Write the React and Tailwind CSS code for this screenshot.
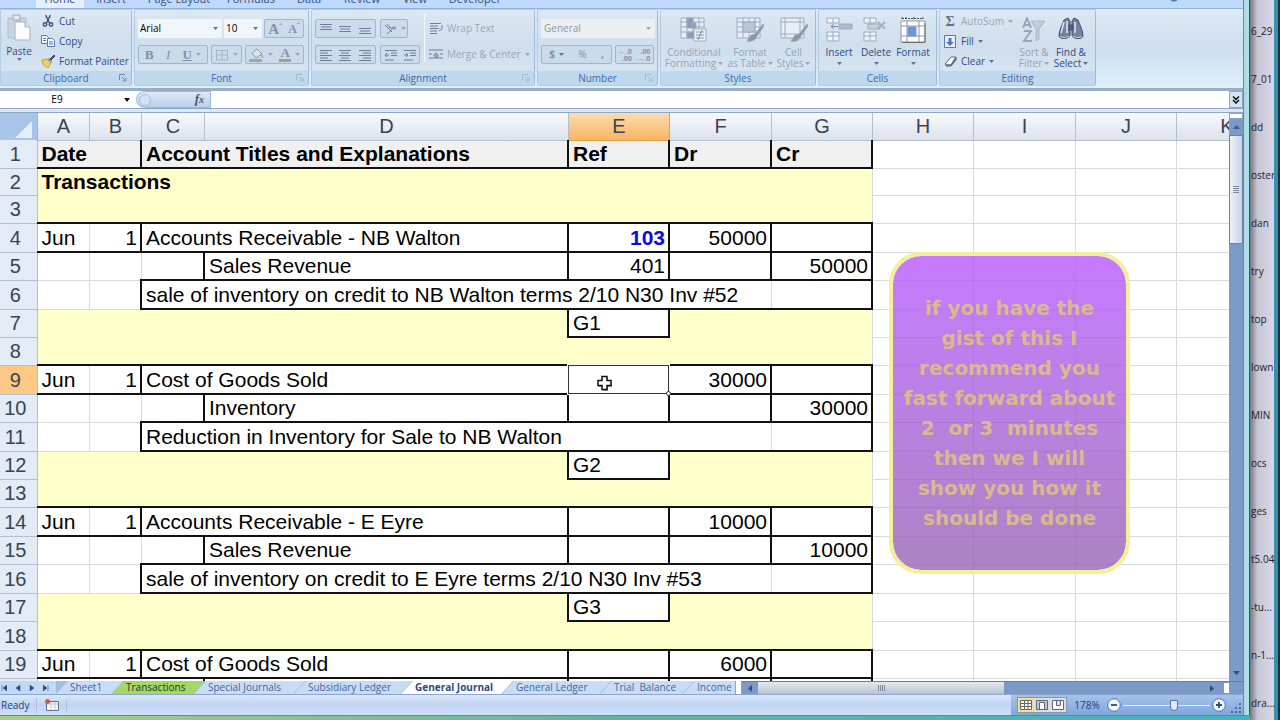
import React from 'react';
import clsx from 'clsx';

const ribbonTabs = [
    { name: 'Home', width: 'w-12' },
    { name: 'Insert', width: 'w-[54px]' },
    { name: 'Page Layout', width: 'w-[82px]' },
    { name: 'Formulas', width: 'w-[62px]' },
    { name: 'Data', width: 'w-[54px]' },
    { name: 'Review', width: 'w-[52px]' },
    { name: 'View', width: 'w-[54px]' },
    { name: 'Developer', width: 'w-[66px]' },
];

const columns = [
    { name: 'A', width: 'w-[52px]' },
    { name: 'B', width: 'w-[52px]' },
    { name: 'C', width: 'w-[63px]' },
    { name: 'D', width: 'w-[364px]' },
    { name: 'E', width: 'w-[101px]' },
    { name: 'F', width: 'w-[102px]' },
    { name: 'G', width: 'w-[101px]' },
    { name: 'H', width: 'w-[101px]' },
    { name: 'I', width: 'w-[102px]' },
    { name: 'J', width: 'w-[101px]' },
    { name: 'K', width: 'w-[101px]' },
];

// kind decides the fill and the ruled lines of a journal row
const rows = [
    { kind: 'title', height: 'h-[28px]', cells: { A: 'Date', C: 'Account Titles and Explanations', E: 'Ref', F: 'Dr', G: 'Cr' } },
    { kind: 'band', height: 'h-[27px]', cells: { A: 'Transactions' } },
    { kind: 'bandEnd', height: 'h-[28px]', cells: {} },
    { kind: 'debit', height: 'h-[29px]', cells: { A: 'Jun', B: '1', C: 'Accounts Receivable - NB Walton', E: '103', F: '50000' } },
    { kind: 'credit', height: 'h-[28px]', cells: { D: 'Sales Revenue', E: '401', G: '50000' } },
    { kind: 'note', height: 'h-[29px]', cells: { C: 'sale of inventory on credit to NB Walton terms 2/10 N30 Inv #52' } },
    { kind: 'ref', height: 'h-[28px]', cells: { E: 'G1' } },
    { kind: 'bandEnd', height: 'h-[28px]', cells: {} },
    { kind: 'debit', height: 'h-[29px]', cells: { A: 'Jun', B: '1', C: 'Cost of Goods Sold', F: '30000' } },
    { kind: 'credit', height: 'h-[28px]', cells: { D: 'Inventory', G: '30000' } },
    { kind: 'note', height: 'h-[29px]', cells: { C: 'Reduction in Inventory for Sale to NB Walton' } },
    { kind: 'ref', height: 'h-[28px]', cells: { E: 'G2' } },
    { kind: 'bandEnd', height: 'h-[28px]', cells: {} },
    { kind: 'debit', height: 'h-[29px]', cells: { A: 'Jun', B: '1', C: 'Accounts Receivable - E Eyre', F: '10000' } },
    { kind: 'credit', height: 'h-[28px]', cells: { D: 'Sales Revenue', G: '10000' } },
    { kind: 'note', height: 'h-[29px]', cells: { C: 'sale of inventory on credit to E Eyre terms 2/10 N30 Inv #53' } },
    { kind: 'ref', height: 'h-[28px]', cells: { E: 'G3' } },
    { kind: 'bandEnd', height: 'h-[29px]', cells: {} },
    { kind: 'debit', height: 'h-[28px]', cells: { A: 'Jun', B: '1', C: 'Cost of Goods Sold', F: '6000' } },
    { kind: 'credit', height: 'h-[28px]', cells: {} },
];

const rules = {
    title: { right: 'BDEFG', bottom: 'ABCDEFG', fill: 'ABCDEFG', open: 'AC' },
    band: { right: '', bottom: '', fill: 'ABCDEFG', open: 'ABCDEF' },
    bandEnd: { right: '', bottom: 'ABCDEFG', fill: 'ABCDEFG', open: 'ABCDEF' },
    debit: { right: 'BDEFG', bottom: 'ABCDEFG', fill: '', open: 'C' },
    credit: { right: 'CDEFG', bottom: 'CDEFG', fill: '', open: '' },
    note: { right: 'BG', bottom: 'CDEFG', fill: '', open: 'CDE' },
    ref: { right: 'DE', bottom: 'E', fill: 'ABCDFG', open: 'ABCF' },
};

const sheets = [
    { name: 'Sheet1', width: 'w-[67px]' },
    { name: 'Transactions', width: 'w-[93px]' },
    { name: 'Special Journals', width: 'w-[111px]' },
    { name: 'Subsidiary Ledger', width: 'w-[118px]' },
    { name: 'General Journal', width: 'w-[112px]' },
    { name: 'General Ledger', width: 'w-[109px]' },
    { name: 'Trial  Balance', width: 'w-[94px]' },
    { name: 'Income', width: 'w-[63px]' },
];

const files = ['6_29', '7_01', 'dd', 'oster', 'dan', 'try', 'top', 'lown', 'MIN', 'ocs', 'ges', 't5.04', '-tu...', 'n-1....', 'dra...'];

function Caret({ dim }) {
    return (
        <svg viewBox="0 0 5 3" className={clsx('h-[3px] w-[5px] shrink-0', dim ? 'text-[#98a6b8]' : 'text-[#5c7394]')}>
            <path d="M0 0h5L2.5 3z" fill="currentColor" />
        </svg>
    );
}

function Launcher({ dim }) {
    return (
        <svg viewBox="0 0 8 8" className={clsx('h-2 w-2', dim ? 'text-[#a9b9cc]' : 'text-[#6c8bb3]')} fill="none" stroke="currentColor">
            <path d="M.5 6V.5H6M3 3l3.5 3.5M7 3.5V7H3.5" />
        </svg>
    );
}

function Group({ title, width, launcher, dimLauncher, children }) {
    return (
        <section aria-label={title} className={clsx('flex shrink-0 flex-col rounded-[2px] border border-[#b3cbe3] border-r-[#9ebbd8] bg-linear-to-b from-[#dce8f3] via-[#cfdeec] to-[#d9e8f4]', width)}>
            <div className="flex min-h-0 flex-1 px-[2px]">{children}</div>
            <div className="flex h-[14px] shrink-0 items-center bg-[#bfd8ed] text-[#3e6aaa]">
                <span className="w-3" />
                <h2 className="flex-1 text-center leading-[14px]">{title}</h2>
                <span className="w-3">{launcher && <Launcher dim={dimLauncher} />}</span>
            </div>
        </section>
    );
}

function ToolBox({ width, children }) {
    return <div className={clsx('flex h-[19px] items-center justify-around rounded-[2px] border border-[#9db6d3] bg-[#cbdbec]', width)}>{children}</div>;
}

function Tool({ label, children }) {
    return <button aria-label={label} className="flex items-center gap-1 text-[#8292a8]">{children}</button>;
}

function Lines({ d, className = 'text-[#6b7f9c]' }) {
    return (
        <svg viewBox="0 0 14 12" className={clsx('h-3 w-[14px]', className)} fill="none" stroke="currentColor" strokeWidth="1">
            <path d={d} />
        </svg>
    );
}

function SmallButton({ icon, label, dim, caret }) {
    return (
        <button className={clsx('flex h-5 items-center gap-1 whitespace-nowrap', dim ? 'text-[#9ba6b3]' : 'text-[#2f4a86]')}>
            <span className="flex w-[14px] justify-center">{icon}</span>
            <span>{label}</span>
            {caret && <Caret dim={dim} />}
        </button>
    );
}

function BigButton({ icon, lines, dim, width, caretBelow }) {
    return (
        <button className={clsx('flex shrink-0 flex-col items-center pt-[7px] leading-[11px]', width, dim ? 'text-[#97a3b2]' : 'text-[#2f4a86]')}>
            <span className="flex h-[30px] items-start">{icon}</span>
            <span className="whitespace-nowrap">{lines[0]}</span>
            <span className="flex h-[11px] items-center gap-[2px] whitespace-nowrap">
                {lines[1]}
                {(caretBelow || lines[1]) && <Caret dim={dim} />}
            </span>
        </button>
    );
}

function PasteIcon() {
    return (
        <svg viewBox="0 0 24 28" className="h-7 w-6">
            <path d="M1 4h18v20H1z" fill="#c8d4e1" stroke="#b3c0ce" />
            <path d="M6 1h7v5H6z" fill="#e6e8ea" stroke="#9aa5b0" />
            <path d="M8 8h10l5 5v13H8z" fill="#fafcfe" stroke="#a5b2c4" />
            <path d="M18 8v5h5" fill="#dde5ee" stroke="#a5b2c4" />
        </svg>
    );
}

function CutIcon() {
    return (
        <svg viewBox="0 0 12 12" className="h-3 w-3" fill="none" stroke="#3f567c" strokeWidth="1.5">
            <path d="M3.5 0l4 8M8.500 0l-4 8" />
            <circle cx="3" cy="9.500" r="1.700" />
            <circle cx="9" cy="9.500" r="1.700" />
        </svg>
    );
}

function CopyIcon() {
    return (
        <svg viewBox="0 0 14 12" className="h-3 w-[14px]" fill="#f4f8ff" stroke="#5b79b0">
            <path d="M.5.5h5l2 2v6h-7z" />
            <path d="M6.500 3.500h5l2 2v6h-7z" />
            <path d="M2 3.500h3M2 5.500h3M8 7h4M8 9h4" />
        </svg>
    );
}

function BrushIcon() {
    return (
        <svg viewBox="0 0 14 13" className="h-[13px] w-[14px]">
            <path d="M1 5l5-1 4 4-3 5C4 12 1 9 1 5z" fill="#f0cf5a" stroke="#c9a23a" />
            <path d="M6 4l3-1 2 2-1 3z" fill="#8b97ad" />
            <path d="M9 4l4-4 1 1-4 4z" fill="#414d68" stroke="#414d68" />
        </svg>
    );
}

function GridIcon({ kind }) {
    return (
        <svg viewBox="0 0 28 26" className="h-[26px] w-7" fill="#e8eef5" stroke="#9dabc0">
            <path d="M1 1h23v20H1z" />
            {kind === 'cell'
                ? <path d="M1 5h23M1 17h23M5 1v20M20 1v20" />
                : <path d="M1 5h23M1 10h23M1 15h23M7 1v20M13 1v20M19 1v20" />}
            {kind === 'conditional' && (
                <>
                    <path d="M7 1h6v10H7zM7 15h9v6H7z" fill="#8e9cb8" />
                    <path d="M12 6h4v5h-4z" fill="#8e9cb8" />
                    <path d="M14 12h12v12H14z" fill="#eef2f6" />
                    <path d="M16 15h8M16 18h8M16 21h8M22 13l-4 10" stroke="#8492a8" />
                </>
            )}
            {kind === 'table' && <path d="M7 5h12v10H7z" fill="#b9c5d6" />}
            {kind !== 'conditional' && <path d="M27 7l-8 10-4 1-4 6c5 1 9-1 10-5l7-10z" fill="#8796ad" stroke="#a1adbf" />}
        </svg>
    );
}

function CellsIcon({ kind }) {
    return (
        <svg viewBox="0 0 28 26" className="h-[26px] w-7" fill="#eef3f9" stroke="#9babc3">
            <path d="M2 1h12v5H2zM8 1v5M2 15h12v9H2zM8 15v9M2 19h12" />
            {kind === 'insert'
                ? <><path d="M14 7h13v5H14z" fill="#aebbcd" /><path d="M13 9.500H6M9 7l-3 2.500L9 12" stroke="#7386a3" /></>
                : <><path d="M6 7h12v5H6z" fill="#c5cfdd" /><path d="M16 5l7 7M23 5l-7 7" stroke="#a3b0c3" strokeWidth="2" /></>}
        </svg>
    );
}

function FormatIcon() {
    return (
        <svg viewBox="0 0 28 27" className="h-[27px] w-7" fill="#fff" stroke="#8a97ab">
            <path d="M2 4h24v21H2z" />
            <path d="M2 9h24M2 19h24M8 4v21M20 4v21" />
            <path d="M9 10h8v9H9z" fill="#6f95d6" stroke="#7596cf" />
            <path d="M3 1.500h21M3 0v3M24 0v3M7 0v3M15 0v3" stroke="#4b4f5a" strokeDasharray="2 1" />
            <path d="M3 25.500h23V6" fill="none" stroke="#6f6f68" />
        </svg>
    );
}

function SortIcon() {
    return (
        <svg viewBox="0 0 26 26" className="h-[26px] w-[26px]" fill="none" stroke="#9aa6b8" strokeWidth="2">
            <path d="M2 11L6 1l4 10M3.500 8h5M3 14h7L3 24h8" />
            <path d="M10 4h14l-6 8v10l-3 2V12z" fill="#c2ccd8" stroke="#a9b5c5" strokeWidth="1" />
        </svg>
    );
}

function FindIcon() {
    return (
        <svg viewBox="0 0 26 24" className="h-6 w-[26px]" stroke="#3f4f72">
            <path d="M6 3l4-2 2 3v14c0 4-10 5-11 1 0-6 3-10 5-16z" fill="#74829f" />
            <path d="M20 3l-4-2-2 3v14c0 4 10 5 11 1 0-6-3-10-5-16z" fill="#74829f" />
            <path d="M11 8h4v5h-4z" fill="#54627f" />
            <path d="M6 5L3 16M17 5v11M9 4v12" stroke="#dfe6f2" strokeWidth="1.500" />
            <path d="M2 19c2 2 6 2 9 0M15 19c3 2 7 2 9 0" fill="none" stroke="#cdd6e6" />
        </svg>
    );
}

function Ribbon() {
    return (
        <div className="flex h-20 gap-[2px] overflow-hidden border-t border-[#8db2dd] bg-linear-to-b from-[#dfeaf4] via-[#cddff0] to-[#dff0fa] pb-[2px] pr-[5px] text-[10px]">
            <Group title="Clipboard" width="w-[132px]" launcher>
                <button className="flex w-8 shrink-0 flex-col items-center pt-1 leading-[13px] text-[#2f4a86]">
                    <PasteIcon />
                    <span className="mt-[3px]">Paste</span>
                    <Caret />
                </button>
                <div className="flex flex-col pl-[6px] pt-px">
                    <SmallButton icon={<CutIcon />} label="Cut" />
                    <SmallButton icon={<CopyIcon />} label="Copy" />
                    <SmallButton icon={<BrushIcon />} label="Format Painter" />
                </div>
            </Group>

            <Group title="Font" width="w-[175px]" launcher dimLauncher>
                <div className="flex flex-1 flex-col gap-[7px] pl-px pt-[9px]">
                    <div className="flex gap-[2px]">
                        <div className="relative flex w-[84px] items-center">
                            <select aria-label="Font name" className="h-[19px] w-full appearance-none bg-[#f1f6fb] pl-[2px] text-black"><option>Arial</option></select>
                            <span className="pointer-events-none absolute right-1"><Caret /></span>
                        </div>
                        <div className="relative flex w-[38px] items-center">
                            <select aria-label="Font size" className="h-[19px] w-full appearance-none bg-[#f1f6fb] pl-[2px] text-black"><option>10</option></select>
                            <span className="pointer-events-none absolute right-1"><Caret /></span>
                        </div>
                        <ToolBox width="w-10">
                            <Tool label="Grow font"><span className="font-[Liberation_Serif] text-[15px] font-bold leading-4">A<sup className="text-[8px]">ˆ</sup></span></Tool>
                            <Tool label="Shrink font"><span className="font-[Liberation_Serif] text-[12px] font-bold leading-4">A<sup className="text-[8px]">ˇ</sup></span></Tool>
                        </ToolBox>
                    </div>
                    <div className="flex gap-[3px] font-[Liberation_Serif] text-[13px] leading-4">
                        <ToolBox width="w-[70px]">
                            <Tool label="Bold"><b>B</b></Tool>
                            <Tool label="Italic"><i>I</i></Tool>
                            <Tool label="Underline"><u className="font-bold">U</u><Caret dim /></Tool>
                        </ToolBox>
                        <ToolBox width="w-[31px]">
                            <Tool label="Borders"><Lines d="M1.500 1v10M12.500 1v10M7 1v10M1 1.500h12M1 6h12M1 11h12" className="text-[#a9b7c9]" /><Caret dim /></Tool>
                        </ToolBox>
                        <ToolBox width="w-[59px]">
                            <Tool label="Fill color">
                                <svg viewBox="0 0 15 14" className="h-[14px] w-[15px]"><path d="M3 5l5-4 5 5-6 4z" fill="#dfe5ec" stroke="#8696ad" /><path d="M12 6l2 4" stroke="#8696ad" /><path d="M0 11h13v3H0z" fill="#a0a6a0" /></svg>
                                <Caret dim />
                            </Tool>
                            <Tool label="Font color"><span className="border-b-[3px] border-[#9f9f93] px-px font-bold leading-3">A</span><Caret dim /></Tool>
                        </ToolBox>
                    </div>
                </div>
            </Group>

            <Group title="Alignment" width="w-[224px]" launcher dimLauncher>
                <div className="flex flex-col gap-[7px] pl-px pt-[9px]">
                    <div className="flex gap-1">
                        <ToolBox width="w-[61px]">
                            <Tool label="Top align"><Lines d="M1 1.500h12M2 4h10M1 6.500h12" /></Tool>
                            <Tool label="Middle align"><Lines d="M1 3.500h12M2 6h10M1 8.500h12" /></Tool>
                            <Tool label="Bottom align"><Lines d="M1 5.500h12M2 8h10M1 10.500h12" /></Tool>
                        </ToolBox>
                        <ToolBox width="w-7">
                            <Tool label="Orientation"><Lines d="M2 2l7 7M4 1l3 3-2 2M7 4l2 2M4 11l8-7M12 4l-3 .5M12 4v3" /><Caret dim /></Tool>
                        </ToolBox>
                    </div>
                    <div className="flex gap-1">
                        <ToolBox width="w-[61px]">
                            <Tool label="Align left"><Lines d="M1 1.500h12M1 4h8M1 6.500h12M1 9h8M1 11.500h12" /></Tool>
                            <Tool label="Center"><Lines d="M1 1.500h12M3 4h8M1 6.500h12M3 9h8M1 11.500h12" /></Tool>
                            <Tool label="Align right"><Lines d="M1 1.500h12M5 4h8M1 6.500h12M5 9h8M1 11.500h12" /></Tool>
                        </ToolBox>
                        <ToolBox width="w-10">
                            <Tool label="Decrease indent"><Lines d="M1 1.500h12M7 4h6M7 6.500h6M1 11h9M5 6H1M3 4L1 6l2 2" /></Tool>
                            <Tool label="Increase indent"><Lines d="M1 1.500h12M7 4h6M7 6.500h6M1 11h9M1 6h4M3 4l2 2-2 2" /></Tool>
                        </ToolBox>
                    </div>
                </div>
                <div className="ml-1 mt-1 h-12 border-l border-[#f4f9fe]" />
                <div className="flex flex-col gap-[6px] pl-1 pt-2">
                    <SmallButton dim icon={<Lines d="M1 1.500h11M1 4h8M1 6.500h9M1 9h7M1 11.500h7M13 3v4l-3 2" />} label="Wrap Text" />
                    <SmallButton dim caret icon={<Lines d="M0 2h14M0 10h14M0 6h3M11 6h3M5 7.500c0-3 4-3 4 0v1.500M9 7H6v2h3" />} label="Merge & Center" />
                </div>
            </Group>

            <Group title="Number" width="w-[121px]" launcher dimLauncher>
                <div className="flex flex-1 flex-col gap-[7px] pl-px pt-[9px]">
                    <div className="relative flex items-center">
                        <select aria-label="Number format" className="h-[19px] w-full appearance-none bg-[#eceff1] pl-[3px] text-[#8d959e]"><option>General</option></select>
                        <span className="pointer-events-none absolute right-1"><Caret dim /></span>
                    </div>
                    <div className="flex gap-[3px]">
                        <ToolBox width="w-[71px]">
                            <Tool label="Accounting format"><b>$</b><Caret /></Tool>
                            <Tool label="Percent style">%</Tool>
                            <Tool label="Comma style"><b>,</b></Tool>
                        </ToolBox>
                        <ToolBox width="w-[39px]">
                            <Tool label="Increase decimal"><span className="text-right text-[7px] font-bold leading-[7px]">←.0<br />.00</span></Tool>
                            <Tool label="Decrease decimal"><span className="text-right text-[7px] font-bold leading-[7px]">.00<br />→.0</span></Tool>
                        </ToolBox>
                    </div>
                </div>
            </Group>

            <Group title="Styles" width="w-[156px]">
                <BigButton dim width="w-[62px]" icon={<GridIcon kind="conditional" />} lines={['Conditional', 'Formatting']} />
                <BigButton dim width="w-[50px]" icon={<GridIcon kind="table" />} lines={['Format', 'as Table']} />
                <BigButton dim width="w-[37px]" icon={<GridIcon kind="cell" />} lines={['Cell', 'Styles']} />
            </Group>

            <Group title="Cells" width="w-[119px]">
                <BigButton caretBelow width="w-9" icon={<CellsIcon kind="insert" />} lines={['Insert']} />
                <BigButton caretBelow width="w-[38px]" icon={<CellsIcon kind="delete" />} lines={['Delete']} />
                <BigButton caretBelow width="w-9" icon={<FormatIcon />} lines={['Format']} />
            </Group>

            <Group title="Editing" width="w-[157px]">
                <div className="flex w-[74px] shrink-0 flex-col pl-px pt-px">
                    <SmallButton dim caret icon={<span className="font-[Liberation_Serif] text-[14px] font-bold text-[#5f6f8a]">Σ</span>} label="AutoSum" />
                    <SmallButton
                        caret
                        icon={<svg viewBox="0 0 12 13" className="h-[13px] w-3"><path d="M.5.5h11v12H.5z" fill="#e9f0fc" stroke="#5477b8" /><path d="M4.500 3h3v4H10l-4 4-4-4h2.500z" fill="#4a78d0" /></svg>}
                        label="Fill"
                    />
                    <SmallButton
                        caret
                        icon={<svg viewBox="0 0 13 11" className="h-[11px] w-[13px]"><path d="M1 8l6-7h5L7 9H2z" fill="#fff" stroke="#59677f" /><path d="M7 9l5-8v3l-5 6H2V9z" fill="#6f7c92" stroke="#59677f" /></svg>}
                        label="Clear"
                    />
                </div>
                <BigButton dim width="w-9" icon={<SortIcon />} lines={['Sort &', 'Filter']} />
                <BigButton width="w-[38px]" icon={<FindIcon />} lines={['Find &', 'Select']} />
            </Group>
        </div>
    );
}

function FormulaBar() {
    return (
        <div className="flex h-[17px] shrink-0 items-stretch bg-white text-[10px]">
            <label className="relative flex w-[136px] items-center">
                <input aria-label="Name box" defaultValue="E9" className="w-[114px] text-center text-black outline-none" />
                <svg viewBox="0 0 6 4" className="absolute right-[6px] h-1 w-[6px]"><path d="M0 0h6L3 4z" fill="#111" /></svg>
            </label>
            <div className="flex w-[75px] items-center justify-between rounded-l-full border border-[#9fb7d6] bg-linear-to-b from-[#dce9f8] to-[#b9cfea] pl-[2px] pr-[6px]">
                <span className="h-3 w-3 rounded-full border border-[#a9bfdb] bg-[#d4e2f2]" />
                <button aria-label="Insert function" className="font-[Liberation_Serif] text-[13px] font-bold italic leading-3 text-[#4d5666]">f<span className="text-[10px]">x</span></button>
            </div>
            <input aria-label="Formula" className="min-w-0 flex-1 outline-none" />
            <button aria-label="Expand formula bar" className="flex w-[14px] items-center justify-center border border-[#8fa8c8] bg-[#d5e2f2]">
                <svg viewBox="0 0 8 8" className="h-2 w-2" fill="none" stroke="#111" strokeWidth="1.500"><path d="M1 .5l3 3 3-3M1 4l3 3 3-3" /></svg>
            </button>
        </div>
    );
}

function Cell({ row, number, column }) {
    const rule = rules[row.kind];
    const text = row.cells[column] || '';
    const isRight = column !== 'C' && column !== 'D' && /^\d+$/.test(text);
    const isActive = number === 9 && column === 'E';
    const filled = rule.fill.includes(column);

    return (
        <td
            className={clsx(
                'whitespace-nowrap p-0 leading-6',
                filled && (row.kind === 'title' ? 'bg-[#f0f0f0]' : 'bg-[#ffffcb]'),
                rule.right.includes(column) ? 'border-r-2 border-r-[#111]' : !rule.open.includes(column) && 'border-r border-r-[#d8dade]',
                rule.bottom.includes(column) ? 'border-b-2 border-b-[#111]' : !filled && 'border-b border-b-[#d8dade]',
                isRight ? 'pr-[3px] text-right' : 'pl-1 text-left',
                number < 3 && 'font-bold',
                number === 4 && column === 'E' && 'font-bold text-[#0a0ae6]',
                isActive && 'relative'
            )}
        >
            {text}
            {isActive && (
                <div className="absolute -inset-px border border-[#333] bg-white outline outline-white">
                    <span className="absolute -bottom-[3px] -right-[3px] h-[5px] w-[5px] rounded-full border border-[#333] bg-white" />
                    <svg viewBox="0 0 18 18" className="absolute left-[27px] top-2 h-[18px] w-[18px]">
                        <path d="M7 4h5v4h4v5h-4v4H7v-4H3V8h4z" fill="#999" />
                        <path d="M6 2.500h5v4h4v5h-4v4H6v-4H2v-5h4z" fill="#fff" stroke="#111" strokeWidth="1.500" />
                    </svg>
                </div>
            )}
        </td>
    );
}

function Sheet() {
    return (
        <div className="relative min-w-0 flex-1 overflow-hidden bg-white font-[Liberation_Sans,Arial,sans-serif]">
            <table className="w-[1277px] table-fixed border-collapse text-[21px] text-black">
                <thead>
                    <tr className="h-[27px] bg-linear-to-b from-[#f7f9fc] to-[#dce2ec] text-[#3a4350]">
                        <th className="w-[37px] border-r border-[#9eb6d6] bg-[#a9c4e9] p-0">
                            <svg viewBox="0 0 36 26" className="block h-[26px] w-9"><path d="M32 7v17H15z" fill="#e6eefa" /></svg>
                        </th>
                        {columns.map(c => (
                            <th key={c.name} className={clsx('border-b border-r border-[#b4bfce] p-0 pl-px text-center text-[20px] font-normal leading-6', c.width, c.name === 'E' && 'border-[#e0a04c] bg-linear-to-b from-[#fbdcae] to-[#f6b65f]')}>{c.name}</th>
                        ))}
                    </tr>
                </thead>
                <tbody>
                    {rows.map((row, i) => (
                        <tr key={i} className={row.height}>
                            <th className={clsx('border-b border-r border-[#b4bfce] p-0 pr-[6px] text-center text-[20px] font-normal leading-6 text-[#3a4350]', i === 8 ? 'bg-[#fbc985]' : 'bg-[#e3ebf6]')}>{i < 19 ? i + 1 : ''}</th>
                            {columns.map(c => (
                                'HIJK'.includes(c.name)
                                    ? <td key={c.name} className="border-b border-r border-[#d8dade] p-0" />
                                    : <Cell key={c.name} row={row} number={i + 1} column={c.name} />
                            ))}
                        </tr>
                    ))}
                </tbody>
            </table>

            {/* callout floating over the grid */}
            <div className="absolute left-[889px] top-[139px] flex h-[322px] w-[241px] items-center justify-center rounded-[32px] border-4 border-[#f3f09a] bg-linear-to-b from-[#b54dffc0] to-[#905bb0c0] bg-clip-padding">
                <p className="whitespace-pre text-center font-[DejaVu_Sans,sans-serif] text-[20px] font-bold leading-[30px] text-[#d9ba90]">
                    {'if you have the\ngist of this I\nrecommend you\nfast forward about\n2  or 3  minutes\nthen we I will\nshow you how it\nshould be done'}
                </p>
            </div>
        </div>
    );
}

function VerticalScroll() {
    return (
        <div className="flex w-[14px] shrink-0 flex-col bg-[#7b9bc6]">
            <div className="h-[6px] border border-[#8aa6cc] bg-white" />
            <button aria-label="Scroll up" className="flex h-4 items-center justify-center"><svg viewBox="0 0 7 4" className="h-1 w-[7px]"><path d="M0 4h7L3.500 0z" fill="#3f5d90" /></svg></button>
            <div className="flex h-[109px] items-center justify-center border border-[#6583ae] bg-linear-to-r from-[#eef2f8] to-[#c9d3e2]">
                <svg viewBox="0 0 6 7" className="h-[7px] w-[6px]" stroke="#7c8ba3"><path d="M0 .5h6M0 2.500h6M0 4.500h6M0 6.500h6" /></svg>
            </div>
            <button aria-label="Scroll down" className="mt-auto flex h-4 items-center justify-center"><svg viewBox="0 0 7 4" className="h-1 w-[7px]"><path d="M0 0h7L3.500 4z" fill="#2f4d85" /></svg></button>
        </div>
    );
}

function SheetTabs() {
    return (
        <div className="flex h-[14px] shrink-0 border-b border-[#8ba7cf] bg-[#a3bee2] text-[10px]">
            <div className="flex w-14 items-center gap-[8px] bg-[#c3d8f4] pl-px text-[#274a8c]">
                {['M1 0v6M6 0v6L2 3z', 'M5 0v6L1 3z', 'M1 0v6l4-3z', 'M5 0v6M0 0v6l4-3z'].map(d => (
                    <button key={d} aria-label="Move between sheets"><svg viewBox="0 0 6 6" className="h-[6px] w-[6px]"><path d={d} fill="currentColor" stroke="currentColor" strokeWidth=".5" /></svg></button>
                ))}
            </div>
            <div className="flex w-[679px] overflow-hidden">
                {sheets.map((s, i) => (
                    <button
                        key={s.name}
                        className={clsx(
                            'shrink-0 whitespace-pre pl-[14px] text-left leading-[13px] [clip-path:polygon(12px_0,100%_0,calc(100%-12px)_100%,0_100%)]',
                            s.width,
                            i > 0 && '-ml-[11px]',
                            s.name === 'Transactions' ? 'bg-[#a5d765] text-[#173a1c]' : s.name === 'General Journal' ? 'bg-white font-bold text-[#2a4a86]' : 'bg-[#c9dcf6] text-[#44669f]'
                        )}
                    >
                        {s.name}
                    </button>
                ))}
            </div>
            <div className="w-[7px] border-x border-[#8aa4cb] bg-white" />
            <div className="flex flex-1 items-stretch border-t border-[#6580a8] bg-[#7b9bc6]">
                <button aria-label="Scroll left" className="flex w-4 items-center justify-center"><svg viewBox="0 0 4 7" className="h-[7px] w-1"><path d="M4 0v7L0 3.500z" fill="#2f4d85" /></svg></button>
                <div className="flex w-[246px] items-center justify-center bg-linear-to-b from-[#e4e8f0] to-[#b9c2d3]">
                    <svg viewBox="0 0 7 6" className="h-[6px] w-[7px]" stroke="#7c8ba3"><path d="M.5 0v6M2.500 0v6M4.500 0v6M6.500 0v6" /></svg>
                </div>
                <button aria-label="Scroll right" className="ml-auto flex w-4 items-center justify-center"><svg viewBox="0 0 4 7" className="h-[7px] w-1"><path d="M0 0v7l4-3.500z" fill="#2f4d85" /></svg></button>
                <div className="ml-1 my-px w-[5px] bg-white" />
                <div className="w-[14px]" />
            </div>
        </div>
    );
}

function StatusBar() {
    return (
        <div className="flex h-5 shrink-0 items-center bg-linear-to-b from-[#dce8f9] via-[#bfd3f2] to-[#cfe0f8] text-[10px] text-[#24427c]">
            <span className="w-[37px] border-r border-[#a9c1e3] pl-px">Ready</span>
            <button aria-label="Record macro" className="flex w-[30px] justify-center border-r border-[#a9c1e3]">
                <svg viewBox="0 0 14 12" className="h-3 w-[14px]"><path d="M1.500 2.500h12v9h-12z" fill="#f4f7fb" stroke="#5d7296" /><path d="M2 5h11M6 3v8M10 3v8" stroke="#c0cbda" /><circle cx="2.500" cy="2.500" r="2.500" fill="#d2593c" /></svg>
            </button>
            <div className="ml-auto flex h-full items-center bg-linear-to-b from-[#a5c3ec] to-[#7fa6dc] pl-[6px]">
                <div className="flex h-4 border border-[#8497b3] bg-[#d9dee5]">
                    <button aria-label="Normal view" className="flex w-4 items-center justify-center bg-[#f9dc8a]"><svg viewBox="0 0 12 10" className="h-[10px] w-3" fill="#fff" stroke="#5f6672"><path d="M.5.5h11v9H.5zM.5 3.500h11M.5 6.500h11M4.500.5v9M8 .5v9" /></svg></button>
                    <button aria-label="Page layout view" className="flex w-4 items-center justify-center"><svg viewBox="0 0 12 10" className="h-[10px] w-3" fill="#c4c8cf" stroke="#5f6672"><path d="M.5.5h11v9H.5z" /><path d="M3.500 2.500h5v7h-5z" fill="#fff" /></svg></button>
                    <button aria-label="Page break view" className="flex w-4 items-center justify-center"><svg viewBox="0 0 12 10" className="h-[10px] w-3" fill="#fff" stroke="#5f6672"><path d="M.5.5h11v9H.5zM4.500.5v5h4v-5" /></svg></button>
                </div>
                <button className="w-10 text-center">178%</button>
                <button aria-label="Zoom out"><svg viewBox="0 0 14 14" className="h-[14px] w-[14px]"><circle cx="7" cy="7" r="6.300" fill="#eef4fc" stroke="#57749f" /><path d="M4 7h6" stroke="#334c78" strokeWidth="1.800" /></svg></button>
                <input
                    type="range"
                    aria-label="Zoom"
                    defaultValue="60"
                    className="mx-[2px] h-3 w-[87px] appearance-none bg-transparent [&::-webkit-slider-runnable-track]:h-px [&::-webkit-slider-runnable-track]:bg-[#e7effb] [&::-webkit-slider-thumb]:-mt-[5px] [&::-webkit-slider-thumb]:h-[11px] [&::-webkit-slider-thumb]:w-2 [&::-webkit-slider-thumb]:appearance-none [&::-webkit-slider-thumb]:rounded-b-full [&::-webkit-slider-thumb]:border [&::-webkit-slider-thumb]:border-[#57749f] [&::-webkit-slider-thumb]:bg-[#dfe9f7]"
                />
                <button aria-label="Zoom in"><svg viewBox="0 0 14 14" className="h-[14px] w-[14px]"><circle cx="7" cy="7" r="6.300" fill="#eef4fc" stroke="#57749f" /><path d="M4 7h6M7 4v6" stroke="#334c78" strokeWidth="1.800" /></svg></button>
                <svg viewBox="0 0 10 10" className="ml-[5px] mr-[2px] mt-[6px] h-[10px] w-[10px]" fill="#4a6a9f"><path d="M8 0h2v2H8zM8 4h2v2H8zM4 4h2v2H4zM8 8h2v2H8zM4 8h2v2H4zM0 8h2v2H0z" /></svg>
            </div>
        </div>
    );
}

export default function App() {
    return (
        <div className="flex h-screen overflow-hidden bg-[#cfd0e2] font-[Open_Sans,Noto_Sans,sans-serif] text-[10px]">
            <div className="flex min-w-0 flex-1 flex-col">
                <main className="flex min-h-0 flex-1 border-r border-[#2b5960] bg-[#a9dcec]">
                    <div className="flex min-w-0 flex-1 flex-col border-r border-[#6b88ab]">
                        <nav className="flex h-2 shrink-0 items-end overflow-hidden bg-[#bfd9fa] pl-9 text-[11px] text-[#34507f]">
                            {ribbonTabs.map((t, i) => (
                                <a key={t.name} href="#" className={clsx('shrink-0 text-center leading-[18px]', t.width, i === 0 && 'bg-[#e6f0fa]')}>{t.name}</a>
                            ))}
                            <svg viewBox="0 0 12 12" className="ml-auto mr-[63px] h-[15px] w-3 shrink-0"><circle cx="6" cy="1.500" r="5" fill="#5b86c4" stroke="#3e659f" /></svg>
                        </nav>
                        <Ribbon />
                        <div className="h-[3px] shrink-0 bg-[#97afc6]" />
                        <FormulaBar />
                        <div className="h-[5px] shrink-0 border-y border-[#8ea7c6] bg-[#dbe7f5]" />
                        <div className="flex min-h-0 flex-1">
                            <Sheet />
                            <VerticalScroll />
                        </div>
                        <SheetTabs />
                        <StatusBar />
                    </div>
                    <div className="w-[5px] bg-linear-to-r from-[#b9d4dc] to-[#9fe8f2]" />
                </main>
                <div className="h-[5px] shrink-0 border-t border-[#5f86a0] bg-linear-to-r from-[#a9cf86] via-[#5fb3a0] to-[#3fb5bf]" />
            </div>

            <aside className="flex w-[30px] shrink-0 border-r-2 border-[#16333c]">
                <ul className="min-w-0 flex-1 overflow-hidden bg-linear-to-r from-[#77777f] via-[#c6c6d4] via-30% to-[#d8d8ea] pt-[7px] text-[10px] text-[#1c1c24]">
                    {files.map(f => (
                        <li key={f} className="h-12 whitespace-nowrap pl-px leading-[48px]">{f}</li>
                    ))}
                </ul>
                <div className="w-1 bg-[#3a8fae]" />
            </aside>
        </div>
    );
}
